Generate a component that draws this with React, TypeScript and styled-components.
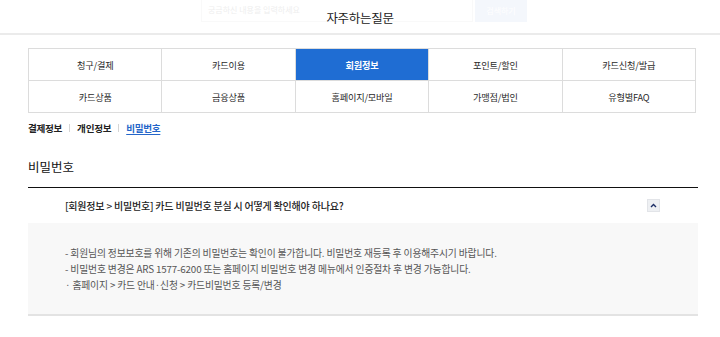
import React, { FC } from 'react';
import styled, { createGlobalStyle } from 'styled-components';

const GlobalStyle = createGlobalStyle`
    * { box-sizing: border-box; }
    body {
        margin: 0;
        background: #fff;
        font-family: "Noto Sans CJK KR", "Noto Sans", sans-serif;
        color: #333;
    }
`;

const Header = styled.header`
    position: relative;
    height: 35px;
    border-bottom: 2px solid #ebebeb;
    display: flex;
    justify-content: center;
    align-items: center;
    overflow: hidden;
`;

const GhostSearch = styled.div`
    position: absolute;
    top: -6px;
    left: 201px;
    display: flex;
    opacity: 0.2;

    .field {
        width: 272px;
        height: 28px;
        border: 1px solid #e6e6e6;
        padding: 9px 6px 0;
        font-size: 8px;
        color: #aaa;
    }

    .btn {
        width: 52px;
        height: 28px;
        margin-left: 2px;
        background: #c9d8f2;
        color: #fff;
        font-size: 8px;
        padding-top: 11px;
        text-align: center;
    }
`;

const Title = styled.h1`
    position: relative;
    margin: 2px 0 0;
    font-size: 12.5px;
    font-weight: 400;
    color: #222;
    letter-spacing: -0.3px;
`;

const Content = styled.main`
    width: 670px;
    margin: 13px 0 0 28px;
`;

const TabGrid = styled.div`
    display: grid;
    grid-template-columns: repeat(5, 1fr);
    border-top: 1px solid #dcdcdc;
    border-left: 1px solid #dcdcdc;
    width: 668px;
`;

const Tab = styled.div<{ $active?: boolean }>`
    height: 32px;
    display: flex;
    align-items: center;
    justify-content: center;
    border-right: 1px solid #dcdcdc;
    border-bottom: 1px solid #dcdcdc;
    font-size: 9.2px;
    letter-spacing: -0.2px;
    font-weight: ${p => (p.$active ? 700 : 400)};
    color: ${p => (p.$active ? '#fff' : '#2a2a2a')};
    background: ${p => (p.$active ? '#1f6dd3' : '#fff')};
`;

const SubTabs = styled.nav`
    display: flex;
    align-items: center;
    margin-top: 8px;
    height: 14px;
`;

const SubTab = styled.span<{ $active?: boolean }>`
    font-size: 9.6px;
    font-weight: 700;
    letter-spacing: -0.3px;
    color: ${p => (p.$active ? '#2566c9' : '#222')};
    text-decoration: ${p => (p.$active ? 'underline' : 'none')};
    text-underline-offset: 2px;
`;

const Divider = styled.span`
    width: 1px;
    height: 8px;
    background: #d5d5d5;
    margin: 0 7px;
`;

const SectionTitle = styled.h2`
    margin: 22px 0 0;
    font-size: 12.5px;
    font-weight: 400;
    color: #111;
    padding-bottom: 11px;
    border-bottom: 1.5px solid #111;
`;

const QuestionRow = styled.div`
    height: 35px;
    display: flex;
    align-items: center;
    justify-content: space-between;
    padding: 0 38px 0 37px;
`;

const Question = styled.span`
    font-size: 10px;
    font-weight: 500;
    color: #222;
    letter-spacing: -0.2px;
`;

const ToggleButton = styled.span`
    width: 13px;
    height: 13px;
    background: #eef0f3;
    border: 1px solid #e2e4e8;
    display: flex;
    align-items: center;
    justify-content: center;
`;

const Answer = styled.div`
    background: #f8f8f8;
    padding: 22px 37px 21px;
    border-bottom: 2px solid #e3e3e3;
`;

const AnswerLine = styled.p`
    margin: 0;
    font-size: 9.8px;
    line-height: 16px;
    color: #555;
    letter-spacing: -0.15px;
`;

const tabs = [
    '청구/결제', '카드이용', '회원정보', '포인트/할인', '카드신청/발급',
    '카드상품', '금융상품', '홈페이지/모바일', '가맹점/법인', '유형별FAQ',
];

const App: FC = () => {
    return (
        <>
            <GlobalStyle />
            <Header>
                <GhostSearch>
                    <div className='field'>궁금하신 내용을 입력하세요</div>
                    <div className='btn'>검색하기</div>
                </GhostSearch>
                <Title>자주하는질문</Title>
            </Header>

            <Content>
                <TabGrid>
                    {tabs.map(t => (
                        <Tab key={t} $active={t === '회원정보'}>{t}</Tab>
                    ))}
                </TabGrid>

                <SubTabs>
                    <SubTab>결제정보</SubTab>
                    <Divider />
                    <SubTab>개인정보</SubTab>
                    <Divider />
                    <SubTab $active>비밀번호</SubTab>
                </SubTabs>

                <SectionTitle>비밀번호</SectionTitle>

                <QuestionRow>
                    <Question>[회원정보 &gt; 비밀번호] 카드 비밀번호 분실 시 어떻게 확인해야 하나요?</Question>
                    <ToggleButton>
                        <svg width='7' height='5' viewBox='0 0 7 5'>
                            <path d='M1 4 L3.5 1.5 L6 4' fill='none' stroke='#1d2f66' strokeWidth='1.4' />
                        </svg>
                    </ToggleButton>
                </QuestionRow>

                <Answer>
                    <AnswerLine>- 회원님의 정보보호를 위해 기존의 비밀번호는 확인이 불가합니다. 비밀번호 재등록 후 이용해주시기 바랍니다.</AnswerLine>
                    <AnswerLine>- 비밀번호 변경은 ARS 1577-6200 또는 홈페이지 비밀번호 변경 메뉴에서 인증절차 후 변경 가능합니다.</AnswerLine>
                    <AnswerLine>· 홈페이지 &gt; 카드 안내·신청 &gt; 카드비밀번호 등록/변경</AnswerLine>
                </Answer>
            </Content>
        </>
    );
};

export default App;
